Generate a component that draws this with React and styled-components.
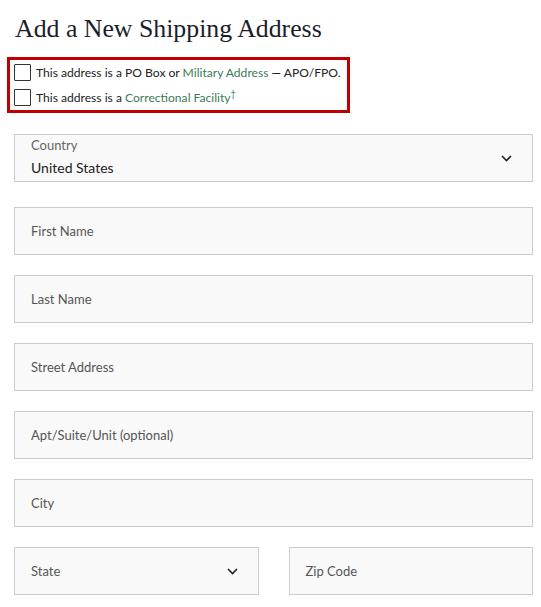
import styled, { createGlobalStyle } from 'styled-components';

const GlobalStyle = createGlobalStyle`
  body {
    margin: 0;
    background: #fff;
    font-family: Lato, 'Open Sans', sans-serif;
    color: #222;
  }
`;

const Page = styled.div`
  padding: 13px 8px 0 14px;
`;

const Heading = styled.h1`
  margin: 0 0 0 1px;
  font-family: 'Liberation Serif', serif;
  font-weight: 400;
  font-size: 25.8px;
  line-height: 32px;
  color: #1c1d2b;
`;

const Highlight = styled.div`
  margin: 12px 0 0 -7px;
  width: 343px;
  box-sizing: border-box;
  border: 3px solid #c00000;
  padding: 4px 4px 4px 4px;
  display: flex;
  flex-direction: column;
  gap: 8px;
`;

const CheckRow = styled.label`
  display: flex;
  align-items: center;
  gap: 5px;
  font-size: 12.1px;
  line-height: 17px;
  color: #222;
  white-space: nowrap;
`;

const Box = styled.span`
  width: 15px;
  height: 15px;
  border: 1px solid #333;
  border-radius: 1px;
  flex: none;
  background: #fff;
`;

const Link = styled.span`
  color: #3b7a57;
`;

const Dagger = styled.sup`
  font-size: 9px;
  line-height: 0;
  color: #3b7a57;
`;

const Fields = styled.div`
  margin-top: 21px;
  display: flex;
  flex-direction: column;
  gap: 20px;
`;

const Pair = styled.div`
  display: grid;
  grid-template-columns: 1fr 1fr;
  gap: 30px;
`;

const Field = styled.div`
  height: 48px;
  box-sizing: border-box;
  border: 1px solid #ccc;
  background: #f9f9f9;
  display: flex;
  align-items: center;
  justify-content: space-between;
  padding: 0 20px 0 16px;
  font-size: 13px;
  color: #555;
  margin-bottom: ${(p) => (p.$spaced ? '5px' : '0')};
`;

const SelectStack = styled.div`
  display: flex;
  flex-direction: column;
  gap: 6px;
  padding-bottom: 4px;
`;

const SmallLabel = styled.span`
  font-size: 13px;
  line-height: 16px;
  color: #666;
`;

const Value = styled.span`
  font-size: 14px;
  line-height: 17px;
  color: #222;
`;

const Chevron = () => (
  <svg width="11" height="7" viewBox="0 0 11 7" fill="none">
    <path d="M1 1l4.5 4.5L10 1" stroke="#222" strokeWidth="1.6" />
  </svg>
);

export default function App() {
  return (
    <Page>
      <GlobalStyle />
      <Heading>Add a New Shipping Address</Heading>
      <Highlight>
        <CheckRow>
          <Box />
          <span>
            This address is a PO Box or <Link>Military Address</Link> — APO/FPO.
          </span>
        </CheckRow>
        <CheckRow>
          <Box />
          <span>
            This address is a <Link>Correctional Facility</Link>
            <Dagger>†</Dagger>
          </span>
        </CheckRow>
      </Highlight>
      <Fields>
        <Field $spaced>
          <SelectStack>
            <SmallLabel>Country</SmallLabel>
            <Value>United States</Value>
          </SelectStack>
          <Chevron />
        </Field>
        <Field>First Name</Field>
        <Field>Last Name</Field>
        <Field>Street Address</Field>
        <Field>Apt/Suite/Unit (optional)</Field>
        <Field>City</Field>
        <Pair>
          <Field>
            State
            <Chevron />
          </Field>
          <Field>Zip Code</Field>
        </Pair>
      </Fields>
    </Page>
  );
}
